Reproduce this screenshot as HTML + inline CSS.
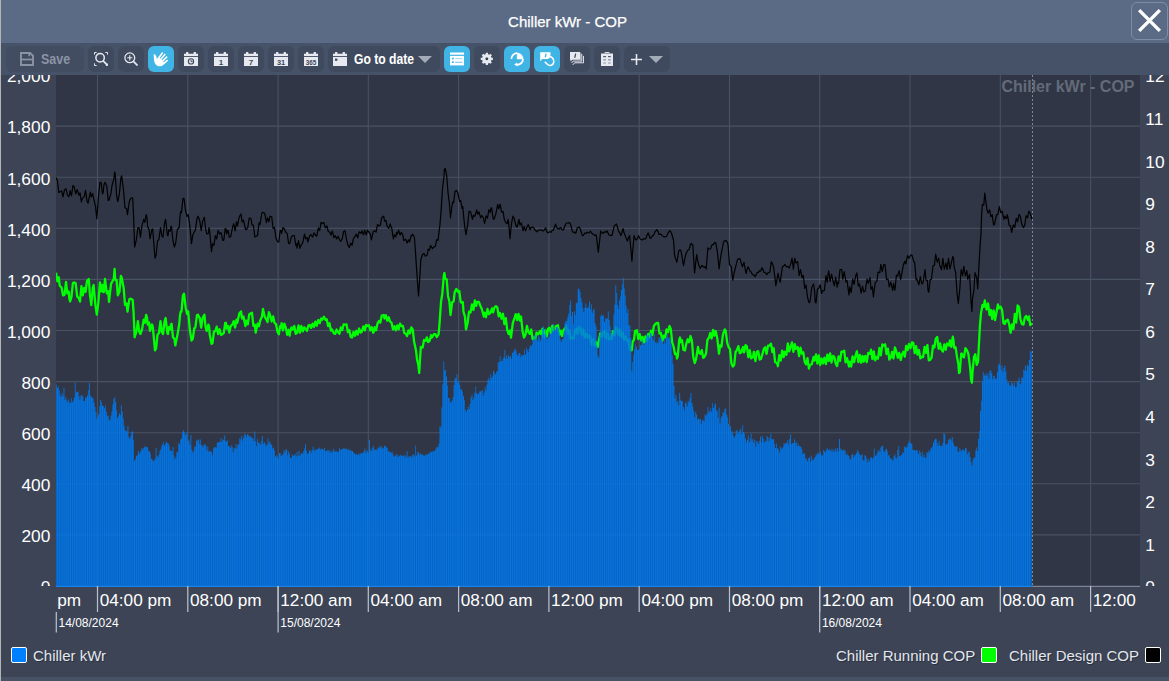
<!DOCTYPE html>
<html lang="en"><head><meta charset="utf-8"><title>Chiller kWr - COP</title>
<style>
html,body{margin:0;padding:0}
body{width:1169px;height:681px;overflow:hidden;position:relative;background:#3c4456;font-family:"Liberation Sans",Arial,sans-serif;color:#fff}
.edge{position:absolute;left:0;top:0;width:1.3px;height:681px;background:#b4b4b6;z-index:5}
.hdr{position:absolute;left:0;top:0;width:1169px;height:43px;background:#5c6b85}
.ttl{position:absolute;left:0;width:1135px;top:12.7px;text-align:center;font-size:15px;line-height:18px;color:#fff;-webkit-text-stroke:.25px #fff}
.cls{position:absolute;left:1131px;top:2px;width:35px;height:36px;border:1px solid #7f8ca6;border-radius:6px;box-sizing:content-box;background:#5c6b85}
.cls svg{position:absolute;left:6.2px;top:6.2px;overflow:visible}
.tbar{position:absolute;left:0;top:43px;width:1169px;height:32px;background:#465267}
.b{position:absolute;top:3px;height:26px;border-radius:6px;background:#404a5e;display:flex;align-items:center;justify-content:center}
.b.on{background:#41b4e6}
.ic{display:block;flex:none}
.save{justify-content:flex-start;background:#434d62}
.save .ic{margin-left:14px}
.sv{position:relative;top:0px;margin-left:7px;font-size:14px;font-weight:bold;color:#8b94a5;display:inline-block;transform:scaleX(.89);transform-origin:left center;margin-right:-4px}
.goto{justify-content:flex-start}
.goto .ic{margin-left:5px}
.gt{position:relative;top:0px;margin-left:7px;font-size:14px;font-weight:bold;color:#fff;white-space:nowrap;display:inline-block;transform:scaleX(.868);transform-origin:left center;margin-right:-8.4px}
.goto .tri{margin-left:3.6px;margin-top:1px}
.plus .tri{margin-left:7.9px;margin-top:1px}
.chart{position:absolute;left:0;top:75px}
.chart text{font-family:"Liberation Sans",Arial,sans-serif;fill:#fff}
.al text{font-size:17.33px}
.chart .xl text{font-size:17.2px}
.dl text{font-size:12px}
.chart text.wm{font-size:16px;font-weight:bold;fill:#636b7a}
.lg{position:absolute;top:647.7px;height:16px;font-size:15px;line-height:16px;color:#e4e7ee;text-shadow:1px 1px 0 #2a303d;white-space:nowrap}
.sq{position:absolute;top:647px;width:14px;height:14px;border:1px solid #fff;border-radius:2px}
.bot{position:absolute;left:0;top:677px;width:1169px;height:4px;background:#475266}
</style></head><body>
<div class="hdr"><div class="ttl">Chiller kWr - COP</div>
<div class="cls"><svg width="23" height="23" viewBox="0 0 23 23"><path d="M1.15 1.15L21.85 21.85M21.85 1.15L1.15 21.85" stroke="#fff" stroke-width="3.4" fill="none"/></svg></div></div>
<div class="tbar"><div class="b save" style="left:6px;width:78px"><svg class="ic" viewBox="0 0 14 14" width="14" height="14" fill="none" stroke="#8b94a5" stroke-width="1.9"><path d="M1 1h9.2l2.8 2.8v9.2H1z"/><path d="M1 7.5h12" stroke-width="1.7"/><path d="M9.2 1v3.2" stroke-width="1.7"/></svg><span class="sv">Save</span></div><div class="b " style="left:88px;width:26px"><svg class="ic" viewBox="0 0 14 14" width="14" height="14" fill="none" stroke="#e6e9f0"><circle cx="6.1" cy="5.7" r="4.2" stroke-width="1.5"/><path d="M9.2 8.9l3.9 3.9" stroke-width="1.7"/><path d="M0.5 2.6V0.5h2.1M11.4 0.5h2.1v2.1M0.5 11.4v2.1h2.1M13.5 11.6v1.9h-1.6" stroke-width="1"/></svg></div><div class="b " style="left:118px;width:26px"><svg class="ic" viewBox="0 0 14 14" width="14" height="14" fill="none" stroke="#e6e9f0"><circle cx="5.8" cy="5.8" r="4.9" stroke-width="1.3"/><path d="M9.4 9.4l4.1 4.1" stroke-width="1.7"/><path d="M3.2 5.8h5.2M5.8 3.2v5.2" stroke-width="1.1"/></svg></div><div class="b on" style="left:148px;width:26px"><svg class="ic" viewBox="0 0 14 14" width="15.5" height="15.5" fill="#fff" stroke="none"><path d="M0.6 2.9 C1.6 2.6 2.6 3.4 2.9 4.6 L3.5 7.2 L8.2 1.0 L9.3 1.7 L5.9 6.6 L6.5 7.0 L10.6 2.2 L11.6 3.1 L7.7 7.9 L8.3 8.4 L12.4 4.6 L13.2 5.6 L9.2 9.6 L9.7 10.1 L13.0 7.7 L13.7 8.8 L9.3 12.6 C7.6 14.2 4.6 14.3 2.9 12.6 C1.2 10.9 0.9 8.5 0.8 6.5 Z"/></svg></div><div class="b " style="left:178px;width:26px"><svg class="ic" viewBox="0 0 14 14" width="14" height="14"><path d="M0 1.7h1.9L2.2 0h2l.3 1.7h5L9.8 0h2l.3 1.7H14V4.1H0z" fill="#e6e9f0"/><rect x="0" y="4.9" width="14" height="9.1" fill="#e6e9f0"/><circle cx="7" cy="9.4" r="2.6" fill="none" stroke="#3d4659" stroke-width="1.1"/><path d="M7 7.8v1.7h1.6" fill="none" stroke="#3d4659" stroke-width=".9"/></svg></div><div class="b " style="left:208px;width:26px"><svg class="ic" viewBox="0 0 14 14" width="14" height="14"><path d="M0 1.7h1.9L2.2 0h2l.3 1.7h5L9.8 0h2l.3 1.7H14V4.1H0z" fill="#e6e9f0"/><rect x="0" y="4.9" width="14" height="9.1" fill="#e6e9f0"/><text x="7" y="12.5" text-anchor="middle" font-size="8" font-weight="bold" fill="#3d4659" font-family="Liberation Sans, sans-serif">1</text></svg></div><div class="b " style="left:238px;width:26px"><svg class="ic" viewBox="0 0 14 14" width="14" height="14"><path d="M0 1.7h1.9L2.2 0h2l.3 1.7h5L9.8 0h2l.3 1.7H14V4.1H0z" fill="#e6e9f0"/><rect x="0" y="4.9" width="14" height="9.1" fill="#e6e9f0"/><text x="7" y="12.5" text-anchor="middle" font-size="8" font-weight="bold" fill="#3d4659" font-family="Liberation Sans, sans-serif">7</text></svg></div><div class="b " style="left:268px;width:26px"><svg class="ic" viewBox="0 0 14 14" width="14" height="14"><path d="M0 1.7h1.9L2.2 0h2l.3 1.7h5L9.8 0h2l.3 1.7H14V4.1H0z" fill="#e6e9f0"/><rect x="0" y="4.9" width="14" height="9.1" fill="#e6e9f0"/><text x="7" y="12.5" text-anchor="middle" font-size="7.4" font-weight="bold" fill="#3d4659" font-family="Liberation Sans, sans-serif">31</text></svg></div><div class="b " style="left:298px;width:26px"><svg class="ic" viewBox="0 0 14 14" width="14" height="14"><path d="M0 1.7h1.9L2.2 0h2l.3 1.7h5L9.8 0h2l.3 1.7H14V4.1H0z" fill="#e6e9f0"/><rect x="0" y="4.9" width="14" height="9.1" fill="#e6e9f0"/><text x="7" y="12.5" text-anchor="middle" font-size="6.3" font-weight="bold" fill="#3d4659" font-family="Liberation Sans, sans-serif">365</text></svg></div><div class="b goto" style="left:328px;width:112px"><svg class="ic" viewBox="0 0 14 14" width="14" height="14"><path d="M0 1.7h1.9L2.2 0h2l.3 1.7h5L9.8 0h2l.3 1.7H14V4.1H0z" fill="#e6e9f0"/><rect x="0" y="4.9" width="14" height="9.1" fill="#e6e9f0"/><rect x="2" y="6.6" width="2.4" height="2.2" fill="#3d4659"/></svg><span class="gt">Go to date</span><svg class="tri" viewBox="0 0 14 7" width="14" height="7"><path d="M0 0h14L7 7z" fill="#a3abb9"/></svg></div><div class="b on" style="left:444px;width:26px"><svg class="ic" viewBox="0 0 14 14" width="14" height="14"><rect x="0" y="0.5" width="14" height="2.2" fill="#fff"/><rect x="0" y="3.9" width="14" height="9.5" fill="#fff"/><rect x="1.9" y="5.7" width="1.9" height="1.7" fill="#41b4e6"/><rect x="5.2" y="6.1" width="7.1" height="1" fill="#9ad8f2"/><rect x="1.9" y="9.3" width="1.9" height="1.7" fill="#41b4e6"/><rect x="5.2" y="9.8" width="7.1" height=".9" fill="#55bde9"/></svg></div><div class="b " style="left:474px;width:26px"><svg class="ic" viewBox="0 0 14 14" width="13.7" height="13.7"><path d="M5.93,0.79L8.07,0.79L8.21,2.25L9.50,2.79L10.64,1.86L12.14,3.36L11.21,4.50L11.75,5.79L13.21,5.93L13.21,8.07L11.75,8.21L11.21,9.50L12.14,10.64L10.64,12.14L9.50,11.21L8.21,11.75L8.07,13.21L5.93,13.21L5.79,11.75L4.50,11.21L3.36,12.14L1.86,10.64L2.79,9.50L2.25,8.21L0.79,8.07L0.79,5.93L2.25,5.79L2.79,4.50L1.86,3.36L3.36,1.86L4.50,2.79L5.79,2.25Z" fill="#e6e9f0"/><circle cx="7" cy="7" r="1.45" fill="#2f3747"/></svg></div><div class="b on" style="left:504px;width:26px"><svg class="ic" viewBox="0 0 16 16" width="16" height="16" fill="none" stroke="#fff"><path d="M8.2 7.9V2A5.9 5.9 0 0 1 14.1 7.9z" fill="#fff" stroke="#fff" stroke-width=".6"/><path d="M8.2 2.1A5.8 5.8 0 0 0 2.4 7.9" stroke-width="1.75"/><path d="M14 7.9A5.8 5.8 0 0 1 7.6 13.7" stroke-width="1.75"/><path d="M8.1 11.4L5.2 13.6L8.5 15.6z" fill="#fff" stroke="none"/></svg></div><div class="b on" style="left:534px;width:26px"><svg class="ic" viewBox="0 0 26 26" width="26" height="26" fill="none"><path d="M6.2 6.3H16.5V9.6L14.2 12.9H8.2L6.2 15.2z" fill="#fff"/><path d="M12.1 7.6L11.2 11.4" stroke="#41b4e6" stroke-width="1.3"/><path d="M14.6 11.2C17.2 9.9 20.2 12.6 19.8 15.8C19.4 19.4 15.6 20.3 13.6 18.5L11.2 16.2" stroke="#fff" stroke-width="1.55" stroke-linecap="round"/></svg></div><div class="b " style="left:564px;width:26px"><svg class="ic" viewBox="0 0 14.2 13.4" width="14.2" height="13.4" fill="none"><path d="M13.6 3.9V10.8H4.6L2.8 12.9" stroke="#e6e9f0" stroke-width="1"/><path d="M10.6 2.2h1.2V9.1H3.2L1.6 11" stroke="#e6e9f0" stroke-width="1"/><rect x="10.3" y="2.7" width="1" height="5.9" fill="#a9b0bf"/><path d="M0 0H10.3V7.7H2.4L0.5 9.6V7.7H0z" fill="#e6e9f0"/><path d="M5.7 1.7L4.7 5.9" stroke="#3d4659" stroke-width="1.2"/></svg></div><div class="b " style="left:594px;width:26px"><svg class="ic" viewBox="0 0 12 14" width="12" height="14"><path d="M0 1.4h3.6V0.6C3.6 0.2 4 0 4.4 0h3.2c.4 0 .8.2.8.6v.8H12V14H0z" fill="#e6e9f0"/><rect x="4" y="0.9" width="4" height="1" fill="#404a5e" opacity=".55"/><g fill="#404a5e" opacity=".9"><rect x="2.2" y="4" width="2.8" height="1.2"/><rect x="7" y="4" width="2.8" height="1.2"/><rect x="2.2" y="7.2" width="2.8" height="1.2" opacity=".6"/><rect x="7" y="7.2" width="2.8" height="1.2" opacity=".6"/><rect x="2.2" y="10.4" width="2.8" height="1.2" opacity=".45"/><rect x="7" y="10.4" width="2.8" height="1.2" opacity=".45"/></g></svg></div><div class="b plus" style="left:624px;width:46px"><svg class="ic" viewBox="0 0 12 12" width="11" height="11"><path d="M6 0v12M0 6h12" stroke="#e6e9f0" stroke-width="1.7" fill="none"/></svg><svg class="tri" viewBox="0 0 14 7" width="14" height="7"><path d="M0 0h14L7 7z" fill="#a3abb9"/></svg></div></div>
<svg class="chart" width="1169" height="602" viewBox="0 75 1169 602">
<defs>
<clipPath id="cp"><rect x="56" y="75" width="1084" height="511"/></clipPath>
<clipPath id="cpb"><rect x="56" y="75" width="1084" height="512"/></clipPath>
<clipPath id="cl"><rect x="0" y="75" width="1169" height="511"/></clipPath>
<clipPath id="cx"><rect x="56" y="586" width="1084" height="60"/></clipPath>
<clipPath id="cb"><path d="M56.00,587V384.7H56.94V387.9H57.88V386.5H58.82V390.2H59.76V395.3H60.70V397.3H61.64V393.1H62.58V395.7H63.52V387.8H64.46V399.8H65.40V396.8H66.34V400.4H67.28V402.2H68.22V399.4H69.16V402.8H70.10V402.4H71.04V398.1H71.98V402.6H72.92V400.4H73.86V397.4H74.80V382.6H75.74V392.6H76.68V392.1H77.62V391.4H78.56V396.1H79.50V399.6H80.44V395.8H81.38V395.1H82.32V396.5H83.26V400.9H84.20V401.2H85.14V397.6H86.08V397.7H87.02V395.5H87.96V390.1H88.90V383.1H89.84V395.2H90.78V396.7H91.72V397.4H92.66V398.6H93.60V402.3H94.54V407.0H95.48V412.1H96.42V418.9H97.36V416.3H98.30V414.1H99.24V406.6H100.18V400.0H101.12V402.2H102.06V405.8H103.00V406.0H103.94V408.2H104.88V405.4H105.82V411.4H106.76V415.6H107.70V415.7H108.64V419.5H109.58V420.6H110.52V415.8H111.46V411.4H112.40V404.4H113.34V398.8H114.28V397.1H115.22V401.9H116.16V410.3H117.10V417.9H118.04V415.7H118.98V413.3H119.92V415.2H120.86V405.3H121.80V411.7H122.74V418.3H123.68V425.9H124.62V430.4H125.56V430.4H126.50V431.6H127.44V425.9H128.38V437.2H129.32V439.1H130.26V435.9H131.20V432.0H132.14V431.2H133.08V440.6H134.02V460.8H134.96V458.9H135.90V455.9H136.84V455.3H137.78V450.8H138.72V453.7H139.66V452.2H140.60V450.5H141.54V448.0H142.48V449.4H143.42V447.8H144.36V446.3H145.30V447.0H146.24V446.8H147.18V447.5H148.12V451.2H149.06V451.3H150.00V453.7H150.94V458.7H151.88V459.4H152.82V460.9H153.76V460.4H154.70V458.7H155.64V448.1H156.58V456.1H157.52V457.3H158.46V454.7H159.40V451.1H160.34V449.1H161.28V446.0H162.22V444.1H163.16V441.8H164.10V445.4H165.04V443.7H165.98V441.7H166.92V443.1H167.86V443.5H168.80V445.7H169.74V450.3H170.68V451.0H171.62V451.1H172.56V447.1H173.50V455.5H174.44V459.1H175.38V457.3H176.32V451.7H177.26V452.6H178.20V443.0H179.14V444.2H180.08V439.7H181.02V438.4H181.96V432.2H182.90V430.2H183.84V432.0H184.78V435.3H185.72V433.7H186.66V432.1H187.60V441.1H188.54V439.5H189.48V444.8H190.42V435.1H191.36V449.4H192.30V452.7H193.24V451.0H194.18V446.5H195.12V446.7H196.06V440.8H197.00V439.8H197.94V439.6H198.88V443.4H199.82V439.5H200.76V445.1H201.70V445.3H202.64V447.3H203.58V444.4H204.52V444.4H205.46V445.6H206.40V450.5H207.34V446.4H208.28V451.7H209.22V451.3H210.16V451.0H211.10V452.2H212.04V455.3H212.98V448.4H213.92V447.4H214.86V446.9H215.80V447.8H216.74V442.9H217.68V441.9H218.62V442.0H219.56V441.8H220.50V438.1H221.44V442.1H222.38V439.3H223.32V440.0H224.26V435.6H225.20V441.3H226.14V441.6H227.08V440.5H228.02V446.1H228.96V446.2H229.90V448.1H230.84V445.2H231.78V446.9H232.72V452.4H233.66V448.2H234.60V448.2H235.54V444.4H236.48V448.4H237.42V443.9H238.36V444.7H239.30V438.4H240.24V439.6H241.18V435.7H242.12V440.8H243.06V437.7H244.00V433.6H244.94V434.8H245.88V437.6H246.82V434.3H247.76V434.8H248.70V436.2H249.64V436.3H250.58V436.7H251.52V438.3H252.46V438.1H253.40V441.0H254.34V431.6H255.28V441.5H256.22V446.3H257.16V438.7H258.10V442.7H259.04V442.8H259.98V444.3H260.92V441.1H261.86V436.1H262.80V444.1H263.74V442.1H264.68V443.6H265.62V446.2H266.56V444.7H267.50V438.4H268.44V443.5H269.38V441.2H270.32V443.7H271.26V444.9H272.20V448.5H273.14V447.7H274.08V450.4H275.02V456.4H275.96V455.0H276.90V456.2H277.84V459.1H278.78V453.0H279.72V452.9H280.66V456.1H281.60V454.7H282.54V454.5H283.48V450.3H284.42V452.2H285.36V449.8H286.30V449.5H287.24V455.2H288.18V451.5H289.12V453.4H290.06V458.0H291.00V457.8H291.94V454.5H292.88V455.9H293.82V455.3H294.76V454.1H295.70V456.5H296.64V452.0H297.58V456.1H298.52V450.9H299.46V455.8H300.40V454.0H301.34V452.9H302.28V453.7H303.22V451.0H304.16V448.6H305.10V444.0H306.04V450.9H306.98V453.7H307.92V453.6H308.86V450.5H309.80V450.4H310.74V452.7H311.68V450.1H312.62V446.7H313.56V451.0H314.50V449.5H315.44V450.5H316.38V449.2H317.32V449.0H318.26V448.4H319.20V447.6H320.14V449.7H321.08V448.5H322.02V449.1H322.96V450.0H323.90V447.9H324.84V451.0H325.78V451.3H326.72V450.3H327.66V451.0H328.60V449.7H329.54V452.7H330.48V450.8H331.42V452.8H332.36V450.9H333.30V448.7H334.24V452.1H335.18V451.2H336.12V451.6H337.06V451.7H338.00V452.1H338.94V448.2H339.88V450.0H340.82V449.4H341.76V449.3H342.70V448.6H343.64V448.3H344.58V449.2H345.52V448.2H346.46V449.2H347.40V450.5H348.34V448.7H349.28V450.8H350.22V450.1H351.16V450.9H352.10V451.1H353.04V452.5H353.98V453.2H354.92V454.3H355.86V454.3H356.80V455.1H357.74V453.5H358.68V454.9H359.62V452.7H360.56V453.9H361.50V452.9H362.44V452.9H363.38V451.3H364.32V448.5H365.26V452.8H366.20V450.1H367.14V451.4H368.08V452.9H369.02V440.1H369.96V449.6H370.90V451.1H371.84V448.0H372.78V445.8H373.72V449.6H374.66V449.9H375.60V448.9H376.54V450.2H377.48V447.5H378.42V448.1H379.36V445.8H380.30V447.5H381.24V446.5H382.18V448.6H383.12V448.2H384.06V445.7H385.00V446.1H385.94V447.2H386.88V448.3H387.82V451.3H388.76V451.4H389.70V452.2H390.64V452.7H391.58V451.7H392.52V454.0H393.46V456.7H394.40V456.1H395.34V455.3H396.28V454.0H397.22V457.1H398.16V455.3H399.10V456.2H400.04V454.7H400.98V455.4H401.92V455.7H402.86V456.1H403.80V454.8H404.74V457.5H405.68V455.7H406.62V451.1H407.56V457.9H408.50V456.2H409.44V456.6H410.38V456.1H411.32V457.5H412.26V455.1H413.20V454.1H414.14V456.6H415.08V445.7H416.02V455.5H416.96V451.9H417.90V452.5H418.84V454.8H419.78V453.1H420.72V454.7H421.66V453.9H422.60V455.1H423.54V456.1H424.48V455.6H425.42V454.3H426.36V454.8H427.30V454.6H428.24V453.1H429.18V453.5H430.12V451.6H431.06V452.0H432.00V451.5H432.94V451.5H433.88V451.1H434.82V450.2H435.76V447.8H436.70V446.8H437.64V447.3H438.58V443.6H439.52V425.9H440.46V427.6H441.40V407.5H442.34V384.3H443.28V361.6H444.22V370.6H445.16V369.9H446.10V376.5H447.04V385.5H447.98V398.1H448.92V398.0H449.86V402.6H450.80V401.9H451.74V400.4H452.68V397.0H453.62V384.9H454.56V378.2H455.50V378.2H456.44V374.2H457.38V381.9H458.32V381.3H459.26V384.8H460.20V389.5H461.14V389.2H462.08V391.7H463.02V396.0H463.96V400.2H464.90V409.4H465.84V411.9H466.78V410.0H467.72V406.7H468.66V409.0H469.60V403.7H470.54V397.5H471.48V394.7H472.42V400.1H473.36V397.5H474.30V392.8H475.24V386.5H476.18V393.2H477.12V394.6H478.06V393.4H479.00V391.4H479.94V391.4H480.88V391.1H481.82V390.0H482.76V395.8H483.70V392.8H484.64V386.9H485.58V390.4H486.52V384.5H487.46V379.7H488.40V377.7H489.34V380.7H490.28V374.0H491.22V378.1H492.16V376.2H493.10V370.7H494.04V372.7H494.98V374.6H495.92V371.4H496.86V371.6H497.80V362.0H498.74V362.5H499.68V356.1H500.62V361.1H501.56V361.1H502.50V358.9H503.44V356.9H504.38V349.7H505.32V359.1H506.26V355.4H507.20V358.4H508.14V355.0H509.08V357.1H510.02V356.0H510.96V359.0H511.90V352.7H512.84V352.2H513.78V350.6H514.72V348.4H515.66V350.8H516.60V354.7H517.54V355.7H518.48V352.9H519.42V352.9H520.36V357.1H521.30V354.9H522.24V355.2H523.18V355.1H524.12V349.6H525.06V354.7H526.00V347.8H526.94V350.3H527.88V352.5H528.82V348.5H529.76V345.4H530.70V345.9H531.64V344.6H532.58V339.8H533.52V335.2H534.46V340.0H535.40V334.7H536.34V338.9H537.28V341.5H538.22V335.5H539.16V338.3H540.10V340.8H541.04V334.8H541.98V329.0H542.92V326.0H543.86V334.3H544.80V328.8H545.74V335.3H546.68V339.3H547.62V337.6H548.56V337.3H549.50V334.1H550.44V333.3H551.38V327.3H552.32V330.7H553.26V323.8H554.20V327.9H555.14V330.7H556.08V327.2H557.02V327.1H557.96V328.6H558.90V331.7H559.84V339.2H560.78V341.7H561.72V339.8H562.66V338.5H563.60V332.1H564.54V322.9H565.48V320.9H566.42V320.7H567.36V317.1H568.30V313.4H569.24V305.2H570.18V300.5H571.12V315.9H572.06V312.0H573.00V324.6H573.94V311.2H574.88V315.3H575.82V303.3H576.76V302.8H577.70V288.6H578.64V289.3H579.58V291.7H580.52V298.1H581.46V302.5H582.40V307.8H583.34V312.0H584.28V308.1H585.22V303.4H586.16V307.7H587.10V308.0H588.04V306.6H588.98V301.6H589.92V309.2H590.86V304.2H591.80V312.7H592.74V310.4H593.68V308.7H594.62V323.1H595.56V326.2H596.50V345.5H597.44V355.4H598.38V357.7H599.32V334.7H600.26V316.2H601.20V314.3H602.14V316.0H603.08V315.0H604.02V321.8H604.96V318.1H605.90V319.1H606.84V318.3H607.78V311.5H608.72V320.0H609.66V325.8H610.60V333.1H611.54V335.3H612.48V331.6H613.42V314.6H614.36V304.8H615.30V285.2H616.24V292.9H617.18V304.9H618.12V308.9H619.06V300.4H620.00V296.5H620.94V290.1H621.88V284.2H622.82V278.0H623.76V288.3H624.70V295.5H625.64V305.8H626.58V312.9H627.52V309.1H628.46V325.6H629.40V325.6H630.34V337.9H631.28V371.3H632.22V362.2H633.16V354.8H634.10V348.8H635.04V344.4H635.98V346.8H636.92V350.1H637.86V350.1H638.80V349.1H639.74V345.3H640.68V345.0H641.62V339.2H642.56V343.5H643.50V344.9H644.44V343.1H645.38V338.0H646.32V333.7H647.26V335.8H648.20V334.8H649.14V337.5H650.08V333.1H651.02V333.7H651.96V337.1H652.90V340.2H653.84V334.5H654.78V342.1H655.72V343.3H656.66V341.4H657.60V343.2H658.54V338.0H659.48V336.9H660.42V339.9H661.36V338.2H662.30V341.3H663.24V344.2H664.18V338.0H665.12V343.4H666.06V338.0H667.00V333.9H667.94V338.3H668.88V337.0H669.82V339.8H670.76V344.9H671.70V355.0H672.64V364.2H673.58V385.9H674.52V397.9H675.46V394.7H676.40V402.2H677.34V400.8H678.28V405.5H679.22V392.8H680.16V399.7H681.10V401.1H682.04V400.9H682.98V406.9H683.92V410.6H684.86V402.6H685.80V403.5H686.74V406.5H687.68V400.8H688.62V402.2H689.56V397.7H690.50V393.0H691.44V403.1H692.38V406.8H693.32V411.0H694.26V417.3H695.20V412.2H696.14V414.8H697.08V419.7H698.02V418.6H698.96V419.5H699.90V418.7H700.84V424.0H701.78V420.7H702.72V419.8H703.66V421.3H704.60V414.4H705.54V415.8H706.48V414.0H707.42V406.9H708.36V412.6H709.30V411.0H710.24V408.2H711.18V411.9H712.12V402.7H713.06V407.9H714.00V405.4H714.94V403.5H715.88V409.9H716.82V411.3H717.76V418.2H718.70V407.7H719.64V423.6H720.58V417.8H721.52V416.1H722.46V412.1H723.40V413.0H724.34V409.0H725.28V408.3H726.22V414.4H727.16V417.4H728.10V423.7H729.04V427.0H729.98V426.2H730.92V431.6H731.86V431.2H732.80V435.5H733.74V437.8H734.68V435.8H735.62V431.0H736.56V429.8H737.50V433.8H738.44V432.1H739.38V430.6H740.32V428.4H741.26V434.0H742.20V425.1H743.14V432.0H744.08V433.6H745.02V438.4H745.96V442.5H746.90V440.0H747.84V435.3H748.78V442.0H749.72V438.6H750.66V433.5H751.60V441.1H752.54V438.7H753.48V442.9H754.42V440.1H755.36V446.8H756.30V441.0H757.24V441.7H758.18V444.0H759.12V440.7H760.06V436.5H761.00V442.7H761.94V436.3H762.88V438.8H763.82V442.6H764.76V441.0H765.70V441.4H766.64V436.1H767.58V437.6H768.52V441.3H769.46V437.7H770.40V433.6H771.34V439.4H772.28V438.9H773.22V439.2H774.16V444.0H775.10V448.0H776.04V443.5H776.98V447.9H777.92V449.5H778.86V452.7H779.80V446.5H780.74V448.5H781.68V448.8H782.62V447.0H783.56V443.2H784.50V444.5H785.44V443.1H786.38V442.8H787.32V439.9H788.26V444.4H789.20V438.9H790.14V434.5H791.08V444.2H792.02V443.3H792.96V443.1H793.90V439.2H794.84V443.4H795.78V441.7H796.72V446.3H797.66V443.5H798.60V446.1H799.54V446.0H800.48V446.9H801.42V449.3H802.36V454.0H803.30V453.3H804.24V453.6H805.18V458.8H806.12V458.6H807.06V461.3H808.00V458.0H808.94V457.4H809.88V462.0H810.82V455.7H811.76V459.8H812.70V460.4H813.64V458.5H814.58V457.1H815.52V455.3H816.46V454.3H817.40V452.4H818.34V453.8H819.28V454.0H820.22V451.7H821.16V455.7H822.10V455.2H823.04V449.9H823.98V451.3H824.92V452.4H825.86V449.8H826.80V447.7H827.74V450.5H828.68V448.9H829.62V449.9H830.56V451.3H831.50V448.7H832.44V451.8H833.38V449.5H834.32V451.6H835.26V448.5H836.20V451.4H837.14V447.9H838.08V451.3H839.02V439.0H839.96V448.5H840.90V449.5H841.84V450.7H842.78V449.6H843.72V450.8H844.66V450.3H845.60V455.0H846.54V453.5H847.48V455.0H848.42V456.0H849.36V459.8H850.30V458.4H851.24V454.7H852.18V454.0H853.12V457.5H854.06V455.2H855.00V454.7H855.94V453.1H856.88V450.2H857.82V451.2H858.76V453.8H859.70V455.0H860.64V455.4H861.58V454.1H862.52V460.1H863.46V460.7H864.40V455.1H865.34V456.0H866.28V458.8H867.22V462.5H868.16V458.8H869.10V461.2H870.04V456.9H870.98V457.4H871.92V459.1H872.86V457.6H873.80V448.5H874.74V455.3H875.68V455.9H876.62V453.6H877.56V451.1H878.50V450.1H879.44V452.3H880.38V447.6H881.32V446.3H882.26V445.8H883.20V450.8H884.14V451.9H885.08V449.6H886.02V449.0H886.96V451.6H887.90V455.5H888.84V454.7H889.78V457.9H890.72V458.8H891.66V459.5H892.60V460.4H893.54V455.9H894.48V454.5H895.42V457.8H896.36V458.6H897.30V450.0H898.24V445.8H899.18V456.3H900.12V455.7H901.06V455.0H902.00V452.6H902.94V452.8H903.88V446.5H904.82V447.1H905.76V448.2H906.70V446.5H907.64V443.6H908.58V440.8H909.52V442.8H910.46V443.1H911.40V443.9H912.34V450.0H913.28V449.8H914.22V450.2H915.16V450.8H916.10V450.2H917.04V450.6H917.98V454.1H918.92V450.4H919.86V452.5H920.80V456.3H921.74V451.7H922.68V457.6H923.62V454.5H924.56V457.5H925.50V457.9H926.44V452.0H927.38V453.5H928.32V450.6H929.26V451.9H930.20V448.7H931.14V447.8H932.08V446.4H933.02V442.4H933.96V440.2H934.90V438.8H935.84V439.2H936.78V442.9H937.72V446.0H938.66V441.0H939.60V445.4H940.54V445.7H941.48V446.2H942.42V442.9H943.36V433.3H944.30V434.3H945.24V444.7H946.18V444.2H947.12V443.5H948.06V439.5H949.00V439.6H949.94V438.5H950.88V440.6H951.82V437.1H952.76V442.4H953.70V445.4H954.64V446.5H955.58V446.8H956.52V446.5H957.46V451.5H958.40V452.0H959.34V447.9H960.28V450.1H961.22V451.2H962.16V449.4H963.10V449.8H964.04V451.0H964.98V447.8H965.92V448.5H966.86V454.3H967.80V452.2H968.74V451.5H969.68V456.9H970.62V461.9H971.56V465.7H972.50V459.6H973.44V458.3H974.38V457.0H975.32V450.4H976.26V447.4H977.20V451.3H978.14V439.0H979.08V431.1H980.02V410.9H980.96V400.7H981.90V381.8H982.84V371.9H983.78V374.7H984.72V376.1H985.66V373.4H986.60V375.7H987.54V373.2H988.48V379.1H989.42V370.7H990.36V370.5H991.30V373.2H992.24V378.9H993.18V375.9H994.12V375.7H995.06V379.0H996.00V378.5H996.94V372.1H997.88V364.8H998.82V363.5H999.76V366.0H1000.70V369.9H1001.64V365.2H1002.58V372.1H1003.52V368.0H1004.46V365.8H1005.40V371.4H1006.34V379.6H1007.28V383.0H1008.22V382.6H1009.16V385.3H1010.10V385.7H1011.04V382.3H1011.98V383.3H1012.92V385.4H1013.86V382.4H1014.80V387.1H1015.74V387.1H1016.68V382.3H1017.62V380.8H1018.56V377.6H1019.50V384.2H1020.44V383.3H1021.38V377.0H1022.32V378.0H1023.26V369.8H1024.20V370.6H1025.14V365.7H1026.08V371.2H1027.02V364.7H1027.96V366.2H1028.90V360.1H1029.84V350.7H1030.78V351.7H1031.72V587Z"/></clipPath>
<pattern id="st" width="1.88" height="8" patternUnits="userSpaceOnUse" x="56"><rect x="0" y="0" width="0.7" height="8" fill="#002a66" fill-opacity=".3"/></pattern>
</defs>
<rect x="56" y="75" width="1084" height="511" fill="#303645"/>
<g stroke="#485265" stroke-width="1.1" shape-rendering="auto"><line x1="97.5" y1="75" x2="97.5" y2="586"/><line x1="187.8" y1="75" x2="187.8" y2="586"/><line x1="278.1" y1="75" x2="278.1" y2="586"/><line x1="368.3" y1="75" x2="368.3" y2="586"/><line x1="458.6" y1="75" x2="458.6" y2="586"/><line x1="548.9" y1="75" x2="548.9" y2="586"/><line x1="639.2" y1="75" x2="639.2" y2="586"/><line x1="729.5" y1="75" x2="729.5" y2="586"/><line x1="819.7" y1="75" x2="819.7" y2="586"/><line x1="910.0" y1="75" x2="910.0" y2="586"/><line x1="1000.3" y1="75" x2="1000.3" y2="586"/><line x1="1090.6" y1="75" x2="1090.6" y2="586"/><line x1="56" y1="534.9" x2="1140" y2="534.9"/><line x1="56" y1="483.8" x2="1140" y2="483.8"/><line x1="56" y1="432.7" x2="1140" y2="432.7"/><line x1="56" y1="381.6" x2="1140" y2="381.6"/><line x1="56" y1="330.5" x2="1140" y2="330.5"/><line x1="56" y1="279.4" x2="1140" y2="279.4"/><line x1="56" y1="228.3" x2="1140" y2="228.3"/><line x1="56" y1="177.2" x2="1140" y2="177.2"/><line x1="56" y1="126.1" x2="1140" y2="126.1"/></g>
<line x1="56" y1="586.3" x2="1140" y2="586.3" stroke="#8d95a4" stroke-width="1"/>
<g clip-path="url(#cpb)">
<path d="M56.0,272.7L57.4,281.4L58.8,277.3L59.7,285.7L61.6,287.6L63.0,295.3L64.5,294.8L66.0,282.0L67.3,293.4L68.7,291.4L69.4,298.6L70.1,301.4L71.5,296.7L72.9,283.0L74.2,282.4L75.7,283.2L77.2,296.6L79.0,298.6L80.0,301.6L81.4,286.2L82.0,290.0L82.8,295.3L84.2,287.8L85.5,292.0L87.0,281.0L88.8,279.0L89.8,293.7L91.3,305.0L92.7,288.1L93.6,285.0L95.5,305.9L96.8,314.7L98.3,303.2L100.0,282.4L101.1,291.3L102.5,284.8L103.3,292.0L103.9,291.9L105.0,279.0L106.8,293.4L108.2,291.3L109.0,301.8L111.0,284.1L112.0,282.0L113.8,278.9L114.6,268.9L115.2,279.8L116.6,279.9L117.8,295.3L119.4,292.1L120.9,275.9L121.7,277.6L123.7,288.3L125.0,305.0L126.5,303.4L127.5,311.5L129.3,299.3L130.7,298.6L132.7,300.0L133.6,312.6L134.6,337.3L136.4,331.7L137.9,321.2L139.2,331.5L140.4,334.0L142.0,329.6L143.7,319.6L144.8,322.9L146.2,314.8L147.0,318.0L147.6,324.5L149.1,322.5L150.0,330.9L151.9,324.4L152.7,326.0L155.0,350.3L156.1,348.4L157.5,334.8L158.2,334.0L158.9,333.2L160.5,321.2L161.8,332.0L163.0,334.0L164.6,321.4L165.6,318.0L167.4,333.4L168.0,334.0L168.8,327.1L170.2,329.5L171.0,324.5L171.6,323.8L173.0,337.4L174.4,338.7L175.3,345.4L177.6,334.0L179.2,324.5L180.1,314.4L180.8,311.5L181.5,311.6L182.9,295.6L184.0,293.7L185.7,308.0L187.1,314.1L188.2,311.5L189.9,330.3L191.5,340.6L192.8,338.8L194.2,328.5L195.3,327.6L197.0,315.1L198.0,314.7L199.8,318.2L201.2,327.6L202.6,317.9L204.4,314.7L205.5,326.5L206.7,331.0L208.3,324.7L209.0,326.0L209.7,334.6L211.5,343.8L212.5,343.0L213.9,331.8L215.4,331.0L216.7,326.7L218.1,334.0L219.6,329.3L221.0,334.9L222.8,334.0L223.8,333.0L225.2,322.9L226.0,322.8L226.6,328.5L228.0,325.9L229.3,332.5L230.8,325.8L232.5,324.4L233.7,321.1L235.1,327.6L236.5,319.7L237.3,322.8L239.3,313.5L241.0,311.5L242.1,318.7L243.5,316.5L245.4,326.0L246.3,320.7L247.8,324.4L249.2,314.5L251.0,313.1L252.0,312.8L253.4,325.9L254.8,324.7L255.7,332.5L257.6,323.7L259.0,326.3L260.0,321.0L261.9,316.7L263.0,309.0L264.7,316.7L266.4,319.6L267.5,322.1L268.9,312.2L270.0,314.7L271.7,321.5L273.1,316.3L274.5,322.8L276.0,324.1L277.7,332.5L278.8,334.2L280.2,326.1L281.0,327.6L281.6,323.2L283.0,330.3L284.4,323.6L285.8,327.6L287.2,334.8L288.6,329.8L289.7,335.7L290.0,332.7L291.5,327.4L293.0,329.5L294.3,326.0L295.7,333.8L297.1,332.8L298.5,325.4L299.9,332.7L301.3,326.0L302.8,331.3L304.2,327.3L306.0,329.4L307.0,330.8L308.4,325.6L309.8,324.9L311.2,327.9L312.6,323.7L314.0,326.9L315.4,321.6L316.8,325.7L318.3,320.0L319.7,323.1L321.1,318.5L322.0,319.8L323.9,316.8L325.5,319.8L326.7,319.2L328.1,326.0L329.5,323.3L330.9,330.5L332.0,329.4L333.8,333.2L335.2,333.9L336.6,329.5L338.4,332.7L339.4,333.8L340.8,327.4L342.2,330.1L343.6,324.5L345.0,324.6L346.5,324.3L347.9,332.2L349.3,330.2L350.7,337.0L351.4,336.0L352.1,337.5L353.5,331.8L354.9,335.8L356.3,330.8L357.7,334.6L359.1,328.5L360.6,332.6L362.0,331.3L363.4,326.4L364.8,330.4L366.2,324.8L367.5,326.0L369.0,325.2L370.4,330.4L371.8,327.2L373.2,332.7L374.0,331.0L374.7,327.1L376.1,330.3L377.5,323.4L378.9,321.0L380.3,322.7L381.7,315.7L383.7,315.0L384.5,318.5L385.9,315.3L387.3,320.7L388.8,317.2L390.0,321.4L391.6,322.9L393.0,329.4L394.4,326.3L395.8,330.3L397.2,325.4L398.6,329.4L400.0,323.7L401.4,326.0L402.9,325.9L404.3,333.1L406.0,334.0L407.1,336.1L408.5,330.3L409.9,333.5L411.3,327.4L412.7,329.4L414.1,341.4L416.0,350.4L417.0,359.3L418.4,365.3L419.2,373.0L420.8,347.0L422.6,347.6L424.0,340.0L425.7,340.7L426.8,337.4L428.2,342.0L429.6,340.9L431.1,335.2L432.0,337.5L433.9,334.2L435.3,334.1L436.7,337.0L438.6,334.3L439.5,324.1L441.0,302.0L442.3,293.7L443.8,275.8L444.4,273.0L445.2,278.7L446.7,279.4L448.0,295.9L449.4,301.6L450.5,315.0L452.2,302.2L453.6,301.4L454.7,292.0L456.4,288.9L458.0,292.0L459.3,291.0L460.7,302.1L462.1,303.2L462.8,302.0L463.5,311.8L464.9,316.4L466.0,329.4L467.7,322.4L469.0,311.7L470.5,312.5L471.9,304.5L473.4,310.0L474.8,300.3L476.2,305.9L477.0,302.0L479.0,302.0L480.4,306.1L481.8,309.0L483.8,316.5L484.6,312.7L486.0,317.2L487.5,309.0L488.9,314.2L490.3,313.0L492.0,308.4L493.1,312.3L494.5,307.3L495.9,306.2L497.3,307.3L498.7,316.3L500.0,313.0L501.6,318.7L503.0,313.8L504.4,324.0L505.8,318.1L506.4,323.0L507.2,329.8L508.6,334.0L510.0,330.5L511.0,337.5L512.8,323.2L514.5,318.0L515.7,314.2L517.1,320.1L518.5,313.8L519.9,320.5L521.0,316.5L522.7,332.1L524.0,337.5L525.5,334.6L527.0,326.0L528.3,331.9L529.8,333.9L531.2,329.5L532.6,339.2L534.0,337.5L535.4,338.5L536.5,332.7L538.2,334.3L540.0,331.0L541.0,334.1L542.5,328.8L543.9,336.7L545.3,330.1L546.0,334.0L546.7,336.5L548.1,328.6L549.5,327.7L550.9,333.2L552.3,325.7L553.7,330.3L555.1,328.9L556.0,326.0L558.0,325.3L559.4,334.7L560.8,330.7L562.0,336.0L563.6,329.9L565.5,327.8L566.4,325.5L567.8,333.9L569.2,330.2L570.6,339.1L572.0,337.5L573.5,338.6L574.9,331.4L576.3,328.6L577.7,333.6L578.4,329.4L579.1,326.9L580.5,328.3L581.9,334.6L583.3,329.7L584.8,337.6L586.2,333.7L588.0,337.5L589.0,335.2L590.4,337.6L591.8,344.8L593.2,339.0L594.6,346.1L596.0,341.9L597.8,347.0L598.9,340.0L600.3,333.3L601.0,334.0L601.7,336.6L603.1,331.8L604.5,331.3L605.9,338.1L607.3,333.0L608.7,339.4L610.7,337.5L611.5,339.2L612.9,331.1L614.4,335.7L615.8,327.5L617.0,329.4L618.6,335.0L620.0,329.6L621.4,337.0L622.8,332.6L624.2,339.9L625.6,336.3L627.0,340.7L628.5,339.8L629.9,349.8L631.7,350.4L632.7,341.9L634.1,339.4L635.0,331.0L636.9,330.2L638.3,339.1L639.7,334.2L641.4,340.7L642.6,336.9L644.0,342.6L645.4,336.4L646.8,341.6L648.2,334.0L649.5,337.5L651.0,330.7L652.4,335.0L653.8,326.2L655.2,324.1L657.0,323.0L658.1,322.8L659.5,333.6L660.9,333.0L662.4,340.7L663.7,335.7L665.1,337.6L666.5,329.5L667.9,332.2L669.5,326.0L670.8,329.0L672.2,342.4L673.7,347.0L675.0,354.1L676.4,353.8L677.0,358.5L677.8,355.9L679.2,339.9L680.0,337.5L680.6,342.1L682.0,340.1L683.4,349.9L685.0,350.4L686.3,343.8L687.7,339.3L689.1,342.3L690.5,336.0L691.9,340.7L693.3,357.3L694.7,363.0L696.1,359.0L698.0,347.0L699.0,353.0L700.4,353.8L701.8,350.1L703.2,357.8L704.4,357.0L706.0,353.8L707.4,339.9L709.0,337.5L710.2,333.0L711.6,338.5L713.1,329.8L714.5,335.7L715.7,331.0L717.3,338.3L719.0,353.7L720.1,345.4L721.5,346.5L722.9,334.6L724.8,329.4L725.8,331.3L727.2,342.8L728.6,347.0L730.0,349.1L731.4,363.2L732.8,366.6L734.2,365.0L735.6,351.7L736.7,350.4L738.4,346.1L739.8,353.2L741.3,352.2L743.0,347.0L744.1,352.4L745.5,345.2L746.9,346.4L748.3,357.2L749.7,350.2L751.1,358.4L753.0,357.0L753.9,352.0L755.4,361.1L756.8,351.9L758.2,351.1L759.6,359.5L761.0,358.9L762.6,353.7L763.8,348.7L765.2,347.3L766.6,353.9L768.0,345.6L769.5,345.7L770.9,343.6L771.6,347.0L772.3,352.1L773.7,348.3L775.1,362.2L777.0,363.0L777.9,366.2L779.3,355.2L780.0,357.0L780.7,360.6L782.1,350.6L783.6,357.2L784.5,351.6L786.4,354.9L787.8,343.5L789.2,351.4L791.0,345.6L792.0,342.4L793.4,351.8L794.8,344.1L795.8,348.8L797.7,347.0L799.1,356.0L800.5,347.7L802.0,353.7L803.3,352.3L804.7,361.9L806.1,364.3L807.5,358.2L808.9,368.6L810.0,365.0L811.8,364.3L813.6,357.0L814.6,360.6L816.0,354.4L817.4,363.5L818.8,355.5L820.2,365.1L821.6,358.5L823.0,363.4L824.4,357.7L825.9,364.1L827.3,354.7L828.0,357.0L828.7,361.0L830.1,353.4L831.5,362.5L832.9,355.9L834.3,356.8L835.7,363.6L837.1,366.1L837.8,361.7L838.5,356.3L840.0,361.0L841.4,351.6L842.7,352.0L844.2,350.6L845.6,362.4L847.0,358.1L849.0,366.6L849.8,361.7L851.2,366.5L852.6,356.5L854.1,362.2L855.6,355.3L856.9,351.3L858.3,362.1L859.7,355.0L861.1,362.7L862.5,355.8L863.7,361.7L865.3,355.9L866.8,362.2L868.2,352.8L870.0,353.7L871.0,349.7L872.4,359.0L873.8,351.3L875.2,360.4L876.6,357.0L878.0,358.7L879.4,348.0L880.8,355.3L882.3,344.5L883.7,345.6L885.1,344.2L886.5,354.0L887.9,348.6L889.3,359.5L891.0,357.0L892.1,351.9L893.5,358.4L894.9,347.5L896.0,350.4L897.8,357.8L899.2,352.9L900.8,360.0L902.0,354.3L903.4,351.7L904.8,356.6L906.2,345.8L907.6,350.1L909.0,344.0L910.5,348.2L911.9,342.4L913.3,342.8L914.7,353.1L915.3,348.8L916.1,346.2L917.5,354.6L918.9,350.0L920.3,358.3L921.8,357.0L923.1,357.2L924.6,346.9L926.0,352.8L926.7,347.2L927.4,345.2L928.8,360.3L930.0,360.0L931.6,357.6L933.0,345.7L934.4,347.4L935.7,339.0L937.2,337.0L938.7,348.8L940.1,343.4L941.0,348.8L942.9,351.5L944.3,344.4L945.7,349.8L947.1,343.4L949.0,345.6L949.9,340.4L951.3,346.8L952.8,336.7L953.5,340.7L954.2,348.0L955.6,347.2L957.0,357.0L958.4,364.3L959.0,373.0L959.8,372.1L961.2,353.6L962.0,353.7L962.6,356.3L964.0,357.4L965.4,348.1L967.0,350.4L968.3,353.6L970.0,366.6L971.1,379.4L971.9,382.7L972.5,372.4L974.0,357.0L975.3,354.2L976.7,364.8L978.0,361.7L980.0,324.6L981.0,313.4L982.5,305.0L983.8,306.9L984.8,300.4L986.6,309.6L988.0,303.5L989.6,315.0L990.8,309.9L992.2,319.1L993.6,310.3L995.1,320.0L996.0,315.0L997.9,304.5L999.0,308.4L1000.7,306.8L1002.1,310.2L1003.5,323.4L1004.9,323.9L1005.8,321.0L1007.8,319.7L1009.2,324.3L1010.6,332.7L1012.0,324.3L1013.4,328.8L1014.8,313.8L1015.5,318.0L1016.2,322.7L1017.6,305.4L1019.0,307.0L1020.4,319.0L1021.8,323.9L1023.5,324.6L1024.7,317.9L1026.1,315.9L1028.0,320.0L1028.9,316.3L1030.3,325.2L1031.6,323.0" fill="none" stroke="#00ff00" stroke-width="2.3" stroke-linejoin="round"/>
<path d="M56.00,587V384.7H56.94V387.9H57.88V386.5H58.82V390.2H59.76V395.3H60.70V397.3H61.64V393.1H62.58V395.7H63.52V387.8H64.46V399.8H65.40V396.8H66.34V400.4H67.28V402.2H68.22V399.4H69.16V402.8H70.10V402.4H71.04V398.1H71.98V402.6H72.92V400.4H73.86V397.4H74.80V382.6H75.74V392.6H76.68V392.1H77.62V391.4H78.56V396.1H79.50V399.6H80.44V395.8H81.38V395.1H82.32V396.5H83.26V400.9H84.20V401.2H85.14V397.6H86.08V397.7H87.02V395.5H87.96V390.1H88.90V383.1H89.84V395.2H90.78V396.7H91.72V397.4H92.66V398.6H93.60V402.3H94.54V407.0H95.48V412.1H96.42V418.9H97.36V416.3H98.30V414.1H99.24V406.6H100.18V400.0H101.12V402.2H102.06V405.8H103.00V406.0H103.94V408.2H104.88V405.4H105.82V411.4H106.76V415.6H107.70V415.7H108.64V419.5H109.58V420.6H110.52V415.8H111.46V411.4H112.40V404.4H113.34V398.8H114.28V397.1H115.22V401.9H116.16V410.3H117.10V417.9H118.04V415.7H118.98V413.3H119.92V415.2H120.86V405.3H121.80V411.7H122.74V418.3H123.68V425.9H124.62V430.4H125.56V430.4H126.50V431.6H127.44V425.9H128.38V437.2H129.32V439.1H130.26V435.9H131.20V432.0H132.14V431.2H133.08V440.6H134.02V460.8H134.96V458.9H135.90V455.9H136.84V455.3H137.78V450.8H138.72V453.7H139.66V452.2H140.60V450.5H141.54V448.0H142.48V449.4H143.42V447.8H144.36V446.3H145.30V447.0H146.24V446.8H147.18V447.5H148.12V451.2H149.06V451.3H150.00V453.7H150.94V458.7H151.88V459.4H152.82V460.9H153.76V460.4H154.70V458.7H155.64V448.1H156.58V456.1H157.52V457.3H158.46V454.7H159.40V451.1H160.34V449.1H161.28V446.0H162.22V444.1H163.16V441.8H164.10V445.4H165.04V443.7H165.98V441.7H166.92V443.1H167.86V443.5H168.80V445.7H169.74V450.3H170.68V451.0H171.62V451.1H172.56V447.1H173.50V455.5H174.44V459.1H175.38V457.3H176.32V451.7H177.26V452.6H178.20V443.0H179.14V444.2H180.08V439.7H181.02V438.4H181.96V432.2H182.90V430.2H183.84V432.0H184.78V435.3H185.72V433.7H186.66V432.1H187.60V441.1H188.54V439.5H189.48V444.8H190.42V435.1H191.36V449.4H192.30V452.7H193.24V451.0H194.18V446.5H195.12V446.7H196.06V440.8H197.00V439.8H197.94V439.6H198.88V443.4H199.82V439.5H200.76V445.1H201.70V445.3H202.64V447.3H203.58V444.4H204.52V444.4H205.46V445.6H206.40V450.5H207.34V446.4H208.28V451.7H209.22V451.3H210.16V451.0H211.10V452.2H212.04V455.3H212.98V448.4H213.92V447.4H214.86V446.9H215.80V447.8H216.74V442.9H217.68V441.9H218.62V442.0H219.56V441.8H220.50V438.1H221.44V442.1H222.38V439.3H223.32V440.0H224.26V435.6H225.20V441.3H226.14V441.6H227.08V440.5H228.02V446.1H228.96V446.2H229.90V448.1H230.84V445.2H231.78V446.9H232.72V452.4H233.66V448.2H234.60V448.2H235.54V444.4H236.48V448.4H237.42V443.9H238.36V444.7H239.30V438.4H240.24V439.6H241.18V435.7H242.12V440.8H243.06V437.7H244.00V433.6H244.94V434.8H245.88V437.6H246.82V434.3H247.76V434.8H248.70V436.2H249.64V436.3H250.58V436.7H251.52V438.3H252.46V438.1H253.40V441.0H254.34V431.6H255.28V441.5H256.22V446.3H257.16V438.7H258.10V442.7H259.04V442.8H259.98V444.3H260.92V441.1H261.86V436.1H262.80V444.1H263.74V442.1H264.68V443.6H265.62V446.2H266.56V444.7H267.50V438.4H268.44V443.5H269.38V441.2H270.32V443.7H271.26V444.9H272.20V448.5H273.14V447.7H274.08V450.4H275.02V456.4H275.96V455.0H276.90V456.2H277.84V459.1H278.78V453.0H279.72V452.9H280.66V456.1H281.60V454.7H282.54V454.5H283.48V450.3H284.42V452.2H285.36V449.8H286.30V449.5H287.24V455.2H288.18V451.5H289.12V453.4H290.06V458.0H291.00V457.8H291.94V454.5H292.88V455.9H293.82V455.3H294.76V454.1H295.70V456.5H296.64V452.0H297.58V456.1H298.52V450.9H299.46V455.8H300.40V454.0H301.34V452.9H302.28V453.7H303.22V451.0H304.16V448.6H305.10V444.0H306.04V450.9H306.98V453.7H307.92V453.6H308.86V450.5H309.80V450.4H310.74V452.7H311.68V450.1H312.62V446.7H313.56V451.0H314.50V449.5H315.44V450.5H316.38V449.2H317.32V449.0H318.26V448.4H319.20V447.6H320.14V449.7H321.08V448.5H322.02V449.1H322.96V450.0H323.90V447.9H324.84V451.0H325.78V451.3H326.72V450.3H327.66V451.0H328.60V449.7H329.54V452.7H330.48V450.8H331.42V452.8H332.36V450.9H333.30V448.7H334.24V452.1H335.18V451.2H336.12V451.6H337.06V451.7H338.00V452.1H338.94V448.2H339.88V450.0H340.82V449.4H341.76V449.3H342.70V448.6H343.64V448.3H344.58V449.2H345.52V448.2H346.46V449.2H347.40V450.5H348.34V448.7H349.28V450.8H350.22V450.1H351.16V450.9H352.10V451.1H353.04V452.5H353.98V453.2H354.92V454.3H355.86V454.3H356.80V455.1H357.74V453.5H358.68V454.9H359.62V452.7H360.56V453.9H361.50V452.9H362.44V452.9H363.38V451.3H364.32V448.5H365.26V452.8H366.20V450.1H367.14V451.4H368.08V452.9H369.02V440.1H369.96V449.6H370.90V451.1H371.84V448.0H372.78V445.8H373.72V449.6H374.66V449.9H375.60V448.9H376.54V450.2H377.48V447.5H378.42V448.1H379.36V445.8H380.30V447.5H381.24V446.5H382.18V448.6H383.12V448.2H384.06V445.7H385.00V446.1H385.94V447.2H386.88V448.3H387.82V451.3H388.76V451.4H389.70V452.2H390.64V452.7H391.58V451.7H392.52V454.0H393.46V456.7H394.40V456.1H395.34V455.3H396.28V454.0H397.22V457.1H398.16V455.3H399.10V456.2H400.04V454.7H400.98V455.4H401.92V455.7H402.86V456.1H403.80V454.8H404.74V457.5H405.68V455.7H406.62V451.1H407.56V457.9H408.50V456.2H409.44V456.6H410.38V456.1H411.32V457.5H412.26V455.1H413.20V454.1H414.14V456.6H415.08V445.7H416.02V455.5H416.96V451.9H417.90V452.5H418.84V454.8H419.78V453.1H420.72V454.7H421.66V453.9H422.60V455.1H423.54V456.1H424.48V455.6H425.42V454.3H426.36V454.8H427.30V454.6H428.24V453.1H429.18V453.5H430.12V451.6H431.06V452.0H432.00V451.5H432.94V451.5H433.88V451.1H434.82V450.2H435.76V447.8H436.70V446.8H437.64V447.3H438.58V443.6H439.52V425.9H440.46V427.6H441.40V407.5H442.34V384.3H443.28V361.6H444.22V370.6H445.16V369.9H446.10V376.5H447.04V385.5H447.98V398.1H448.92V398.0H449.86V402.6H450.80V401.9H451.74V400.4H452.68V397.0H453.62V384.9H454.56V378.2H455.50V378.2H456.44V374.2H457.38V381.9H458.32V381.3H459.26V384.8H460.20V389.5H461.14V389.2H462.08V391.7H463.02V396.0H463.96V400.2H464.90V409.4H465.84V411.9H466.78V410.0H467.72V406.7H468.66V409.0H469.60V403.7H470.54V397.5H471.48V394.7H472.42V400.1H473.36V397.5H474.30V392.8H475.24V386.5H476.18V393.2H477.12V394.6H478.06V393.4H479.00V391.4H479.94V391.4H480.88V391.1H481.82V390.0H482.76V395.8H483.70V392.8H484.64V386.9H485.58V390.4H486.52V384.5H487.46V379.7H488.40V377.7H489.34V380.7H490.28V374.0H491.22V378.1H492.16V376.2H493.10V370.7H494.04V372.7H494.98V374.6H495.92V371.4H496.86V371.6H497.80V362.0H498.74V362.5H499.68V356.1H500.62V361.1H501.56V361.1H502.50V358.9H503.44V356.9H504.38V349.7H505.32V359.1H506.26V355.4H507.20V358.4H508.14V355.0H509.08V357.1H510.02V356.0H510.96V359.0H511.90V352.7H512.84V352.2H513.78V350.6H514.72V348.4H515.66V350.8H516.60V354.7H517.54V355.7H518.48V352.9H519.42V352.9H520.36V357.1H521.30V354.9H522.24V355.2H523.18V355.1H524.12V349.6H525.06V354.7H526.00V347.8H526.94V350.3H527.88V352.5H528.82V348.5H529.76V345.4H530.70V345.9H531.64V344.6H532.58V339.8H533.52V335.2H534.46V340.0H535.40V334.7H536.34V338.9H537.28V341.5H538.22V335.5H539.16V338.3H540.10V340.8H541.04V334.8H541.98V329.0H542.92V326.0H543.86V334.3H544.80V328.8H545.74V335.3H546.68V339.3H547.62V337.6H548.56V337.3H549.50V334.1H550.44V333.3H551.38V327.3H552.32V330.7H553.26V323.8H554.20V327.9H555.14V330.7H556.08V327.2H557.02V327.1H557.96V328.6H558.90V331.7H559.84V339.2H560.78V341.7H561.72V339.8H562.66V338.5H563.60V332.1H564.54V322.9H565.48V320.9H566.42V320.7H567.36V317.1H568.30V313.4H569.24V305.2H570.18V300.5H571.12V315.9H572.06V312.0H573.00V324.6H573.94V311.2H574.88V315.3H575.82V303.3H576.76V302.8H577.70V288.6H578.64V289.3H579.58V291.7H580.52V298.1H581.46V302.5H582.40V307.8H583.34V312.0H584.28V308.1H585.22V303.4H586.16V307.7H587.10V308.0H588.04V306.6H588.98V301.6H589.92V309.2H590.86V304.2H591.80V312.7H592.74V310.4H593.68V308.7H594.62V323.1H595.56V326.2H596.50V345.5H597.44V355.4H598.38V357.7H599.32V334.7H600.26V316.2H601.20V314.3H602.14V316.0H603.08V315.0H604.02V321.8H604.96V318.1H605.90V319.1H606.84V318.3H607.78V311.5H608.72V320.0H609.66V325.8H610.60V333.1H611.54V335.3H612.48V331.6H613.42V314.6H614.36V304.8H615.30V285.2H616.24V292.9H617.18V304.9H618.12V308.9H619.06V300.4H620.00V296.5H620.94V290.1H621.88V284.2H622.82V278.0H623.76V288.3H624.70V295.5H625.64V305.8H626.58V312.9H627.52V309.1H628.46V325.6H629.40V325.6H630.34V337.9H631.28V371.3H632.22V362.2H633.16V354.8H634.10V348.8H635.04V344.4H635.98V346.8H636.92V350.1H637.86V350.1H638.80V349.1H639.74V345.3H640.68V345.0H641.62V339.2H642.56V343.5H643.50V344.9H644.44V343.1H645.38V338.0H646.32V333.7H647.26V335.8H648.20V334.8H649.14V337.5H650.08V333.1H651.02V333.7H651.96V337.1H652.90V340.2H653.84V334.5H654.78V342.1H655.72V343.3H656.66V341.4H657.60V343.2H658.54V338.0H659.48V336.9H660.42V339.9H661.36V338.2H662.30V341.3H663.24V344.2H664.18V338.0H665.12V343.4H666.06V338.0H667.00V333.9H667.94V338.3H668.88V337.0H669.82V339.8H670.76V344.9H671.70V355.0H672.64V364.2H673.58V385.9H674.52V397.9H675.46V394.7H676.40V402.2H677.34V400.8H678.28V405.5H679.22V392.8H680.16V399.7H681.10V401.1H682.04V400.9H682.98V406.9H683.92V410.6H684.86V402.6H685.80V403.5H686.74V406.5H687.68V400.8H688.62V402.2H689.56V397.7H690.50V393.0H691.44V403.1H692.38V406.8H693.32V411.0H694.26V417.3H695.20V412.2H696.14V414.8H697.08V419.7H698.02V418.6H698.96V419.5H699.90V418.7H700.84V424.0H701.78V420.7H702.72V419.8H703.66V421.3H704.60V414.4H705.54V415.8H706.48V414.0H707.42V406.9H708.36V412.6H709.30V411.0H710.24V408.2H711.18V411.9H712.12V402.7H713.06V407.9H714.00V405.4H714.94V403.5H715.88V409.9H716.82V411.3H717.76V418.2H718.70V407.7H719.64V423.6H720.58V417.8H721.52V416.1H722.46V412.1H723.40V413.0H724.34V409.0H725.28V408.3H726.22V414.4H727.16V417.4H728.10V423.7H729.04V427.0H729.98V426.2H730.92V431.6H731.86V431.2H732.80V435.5H733.74V437.8H734.68V435.8H735.62V431.0H736.56V429.8H737.50V433.8H738.44V432.1H739.38V430.6H740.32V428.4H741.26V434.0H742.20V425.1H743.14V432.0H744.08V433.6H745.02V438.4H745.96V442.5H746.90V440.0H747.84V435.3H748.78V442.0H749.72V438.6H750.66V433.5H751.60V441.1H752.54V438.7H753.48V442.9H754.42V440.1H755.36V446.8H756.30V441.0H757.24V441.7H758.18V444.0H759.12V440.7H760.06V436.5H761.00V442.7H761.94V436.3H762.88V438.8H763.82V442.6H764.76V441.0H765.70V441.4H766.64V436.1H767.58V437.6H768.52V441.3H769.46V437.7H770.40V433.6H771.34V439.4H772.28V438.9H773.22V439.2H774.16V444.0H775.10V448.0H776.04V443.5H776.98V447.9H777.92V449.5H778.86V452.7H779.80V446.5H780.74V448.5H781.68V448.8H782.62V447.0H783.56V443.2H784.50V444.5H785.44V443.1H786.38V442.8H787.32V439.9H788.26V444.4H789.20V438.9H790.14V434.5H791.08V444.2H792.02V443.3H792.96V443.1H793.90V439.2H794.84V443.4H795.78V441.7H796.72V446.3H797.66V443.5H798.60V446.1H799.54V446.0H800.48V446.9H801.42V449.3H802.36V454.0H803.30V453.3H804.24V453.6H805.18V458.8H806.12V458.6H807.06V461.3H808.00V458.0H808.94V457.4H809.88V462.0H810.82V455.7H811.76V459.8H812.70V460.4H813.64V458.5H814.58V457.1H815.52V455.3H816.46V454.3H817.40V452.4H818.34V453.8H819.28V454.0H820.22V451.7H821.16V455.7H822.10V455.2H823.04V449.9H823.98V451.3H824.92V452.4H825.86V449.8H826.80V447.7H827.74V450.5H828.68V448.9H829.62V449.9H830.56V451.3H831.50V448.7H832.44V451.8H833.38V449.5H834.32V451.6H835.26V448.5H836.20V451.4H837.14V447.9H838.08V451.3H839.02V439.0H839.96V448.5H840.90V449.5H841.84V450.7H842.78V449.6H843.72V450.8H844.66V450.3H845.60V455.0H846.54V453.5H847.48V455.0H848.42V456.0H849.36V459.8H850.30V458.4H851.24V454.7H852.18V454.0H853.12V457.5H854.06V455.2H855.00V454.7H855.94V453.1H856.88V450.2H857.82V451.2H858.76V453.8H859.70V455.0H860.64V455.4H861.58V454.1H862.52V460.1H863.46V460.7H864.40V455.1H865.34V456.0H866.28V458.8H867.22V462.5H868.16V458.8H869.10V461.2H870.04V456.9H870.98V457.4H871.92V459.1H872.86V457.6H873.80V448.5H874.74V455.3H875.68V455.9H876.62V453.6H877.56V451.1H878.50V450.1H879.44V452.3H880.38V447.6H881.32V446.3H882.26V445.8H883.20V450.8H884.14V451.9H885.08V449.6H886.02V449.0H886.96V451.6H887.90V455.5H888.84V454.7H889.78V457.9H890.72V458.8H891.66V459.5H892.60V460.4H893.54V455.9H894.48V454.5H895.42V457.8H896.36V458.6H897.30V450.0H898.24V445.8H899.18V456.3H900.12V455.7H901.06V455.0H902.00V452.6H902.94V452.8H903.88V446.5H904.82V447.1H905.76V448.2H906.70V446.5H907.64V443.6H908.58V440.8H909.52V442.8H910.46V443.1H911.40V443.9H912.34V450.0H913.28V449.8H914.22V450.2H915.16V450.8H916.10V450.2H917.04V450.6H917.98V454.1H918.92V450.4H919.86V452.5H920.80V456.3H921.74V451.7H922.68V457.6H923.62V454.5H924.56V457.5H925.50V457.9H926.44V452.0H927.38V453.5H928.32V450.6H929.26V451.9H930.20V448.7H931.14V447.8H932.08V446.4H933.02V442.4H933.96V440.2H934.90V438.8H935.84V439.2H936.78V442.9H937.72V446.0H938.66V441.0H939.60V445.4H940.54V445.7H941.48V446.2H942.42V442.9H943.36V433.3H944.30V434.3H945.24V444.7H946.18V444.2H947.12V443.5H948.06V439.5H949.00V439.6H949.94V438.5H950.88V440.6H951.82V437.1H952.76V442.4H953.70V445.4H954.64V446.5H955.58V446.8H956.52V446.5H957.46V451.5H958.40V452.0H959.34V447.9H960.28V450.1H961.22V451.2H962.16V449.4H963.10V449.8H964.04V451.0H964.98V447.8H965.92V448.5H966.86V454.3H967.80V452.2H968.74V451.5H969.68V456.9H970.62V461.9H971.56V465.7H972.50V459.6H973.44V458.3H974.38V457.0H975.32V450.4H976.26V447.4H977.20V451.3H978.14V439.0H979.08V431.1H980.02V410.9H980.96V400.7H981.90V381.8H982.84V371.9H983.78V374.7H984.72V376.1H985.66V373.4H986.60V375.7H987.54V373.2H988.48V379.1H989.42V370.7H990.36V370.5H991.30V373.2H992.24V378.9H993.18V375.9H994.12V375.7H995.06V379.0H996.00V378.5H996.94V372.1H997.88V364.8H998.82V363.5H999.76V366.0H1000.70V369.9H1001.64V365.2H1002.58V372.1H1003.52V368.0H1004.46V365.8H1005.40V371.4H1006.34V379.6H1007.28V383.0H1008.22V382.6H1009.16V385.3H1010.10V385.7H1011.04V382.3H1011.98V383.3H1012.92V385.4H1013.86V382.4H1014.80V387.1H1015.74V387.1H1016.68V382.3H1017.62V380.8H1018.56V377.6H1019.50V384.2H1020.44V383.3H1021.38V377.0H1022.32V378.0H1023.26V369.8H1024.20V370.6H1025.14V365.7H1026.08V371.2H1027.02V364.7H1027.96V366.2H1028.90V360.1H1029.84V350.7H1030.78V351.7H1031.72V587Z" fill="#0082ff" fill-opacity=".82"/>
<rect x="56" y="75" width="1084" height="511" fill="url(#st)" clip-path="url(#cb)"/>
<path d="M56.0,177.5L57.4,180.5L58.8,192.5L59.7,192.0L61.6,190.9L63.0,196.8L64.5,189.7L66.0,188.8L67.3,194.7L68.7,196.7L69.4,195.2L70.1,190.5L71.5,195.9L72.9,185.5L74.2,187.0L75.7,194.0L77.2,189.6L79.0,195.2L80.0,192.9L81.4,201.8L82.3,198.4L84.2,196.9L85.5,190.4L87.0,200.8L88.0,203.3L90.4,192.0L91.2,197.0L92.7,193.5L93.6,198.4L95.5,206.4L96.8,218.8L98.3,198.1L100.0,182.3L101.1,182.6L102.5,194.0L103.3,192.0L103.9,185.0L105.0,182.3L106.8,186.0L108.2,200.4L109.0,200.0L111.0,193.4L112.0,185.5L113.8,179.6L114.6,172.0L115.2,173.9L116.6,195.3L117.8,201.7L119.4,193.6L120.9,178.0L121.7,175.8L123.7,192.1L125.0,208.0L126.5,208.3L127.5,214.6L129.3,201.5L130.7,198.4L132.7,197.8L133.6,216.9L134.6,247.0L136.4,239.6L137.9,227.5L139.2,228.1L140.4,237.2L142.0,225.4L143.7,219.4L144.8,222.3L146.2,214.7L147.0,217.8L147.6,226.5L149.1,229.5L150.0,238.8L151.9,229.4L152.7,229.0L155.0,258.2L156.1,255.2L157.5,241.0L158.2,240.4L158.9,239.4L160.5,227.5L161.8,236.0L163.0,237.2L164.6,222.9L165.6,219.4L167.4,235.5L168.0,235.6L168.8,229.6L170.2,231.3L171.0,226.0L171.6,227.2L173.0,241.0L174.4,247.0L175.8,242.3L176.6,235.6L177.3,229.6L179.2,227.5L180.1,215.0L180.8,211.4L181.5,212.8L182.9,198.7L184.0,198.4L185.7,211.4L187.1,216.5L188.2,214.6L189.9,226.5L191.5,243.7L192.8,235.0L194.2,231.9L195.3,230.7L197.0,218.3L198.0,216.2L199.8,220.8L201.2,230.7L202.6,221.5L204.4,217.2L205.5,228.0L206.7,234.0L208.3,233.7L209.0,227.5L209.7,231.4L211.5,251.7L212.5,243.7L213.9,245.3L215.4,235.6L216.7,239.0L218.1,230.4L219.6,234.0L221.0,232.6L222.8,240.4L223.8,240.1L225.2,228.4L226.0,229.0L226.6,233.8L228.0,230.2L229.3,237.2L230.8,236.7L232.5,227.5L233.7,223.7L235.1,231.0L236.5,221.8L237.3,226.0L239.3,216.9L241.0,214.0L242.1,221.8L243.5,220.1L245.4,229.0L246.3,229.8L247.8,227.4L249.2,218.0L251.0,218.5L252.0,224.9L253.4,225.2L254.8,236.8L255.7,236.6L257.6,235.4L259.0,222.8L260.0,224.3L261.9,213.0L263.0,212.3L264.7,213.2L266.4,222.7L267.5,217.8L268.9,221.8L270.0,216.2L271.7,216.8L273.1,228.5L274.5,227.5L276.0,238.5L277.7,242.0L278.8,242.0L280.2,230.7L281.0,230.7L281.6,233.4L283.0,227.5L284.4,229.0L285.8,232.4L287.2,233.5L288.6,243.4L289.7,243.7L291.5,236.7L293.2,235.6L294.3,235.5L295.7,245.1L296.5,243.7L297.1,248.1L298.5,240.5L299.9,248.3L301.0,245.3L302.8,242.6L304.5,234.0L305.6,238.8L307.0,237.5L307.8,242.0L309.8,235.5L311.0,234.6L312.6,237.1L314.0,232.8L315.8,235.6L316.8,236.1L318.3,228.1L319.7,230.4L321.1,222.4L322.0,223.6L323.9,222.4L325.3,227.8L327.0,226.0L328.1,231.1L330.0,232.4L330.9,235.1L332.4,231.0L333.8,237.6L335.2,235.6L336.6,238.9L338.0,236.3L340.0,240.4L340.8,241.3L342.2,238.9L343.6,231.6L345.0,230.7L346.5,239.5L348.0,245.3L349.3,247.5L350.7,243.0L352.0,245.3L353.5,238.4L354.6,237.2L356.3,234.1L357.7,237.8L359.1,231.8L361.0,233.3L362.0,230.8L363.4,234.8L364.8,230.1L366.2,235.0L367.6,230.2L369.0,232.4L370.4,234.2L371.4,239.8L373.2,231.7L374.6,230.7L376.1,232.0L377.5,224.5L378.8,226.0L380.3,225.3L381.7,217.4L383.7,216.2L384.5,221.0L385.9,220.3L387.0,226.0L388.8,228.4L390.2,223.8L390.8,226.0L391.6,227.3L393.4,238.8L394.4,234.8L395.8,236.8L396.6,232.4L397.2,234.3L398.6,230.1L400.0,234.9L401.4,232.4L402.9,235.2L403.7,240.4L405.7,239.2L407.1,243.0L408.5,239.8L409.5,242.0L411.3,235.3L412.0,235.6L412.7,234.2L414.4,237.2L415.5,252.2L416.6,269.5L418.5,296.0L419.8,277.5L420.8,259.8L422.6,254.3L424.0,253.4L425.4,256.2L427.3,255.0L428.2,249.2L429.6,250.1L430.5,245.3L432.5,248.7L433.7,246.9L435.3,246.6L436.7,239.6L438.0,240.4L440.0,224.3L440.9,213.2L442.5,188.8L443.8,178.2L444.4,169.4L445.2,168.4L446.7,175.8L448.0,192.6L449.4,203.5L450.5,217.8L452.2,204.3L453.0,201.7L453.6,202.9L455.0,191.4L456.3,190.4L457.8,192.4L459.6,201.7L460.7,200.7L462.1,208.5L462.8,206.5L463.5,214.8L464.9,228.2L466.0,234.6L467.7,224.6L469.0,211.4L470.5,211.6L472.5,219.4L473.4,215.2L474.8,216.4L476.7,209.8L477.6,214.3L479.0,211.8L480.6,217.8L481.8,215.5L483.2,217.3L484.6,223.3L485.4,220.4L486.0,215.8L487.5,218.1L488.9,209.7L490.3,212.5L491.0,208.0L491.7,207.8L493.1,218.6L494.0,219.4L495.9,213.7L497.7,204.3L498.7,208.9L500.1,204.2L501.6,212.2L503.0,211.4L504.4,219.8L505.8,222.7L507.2,223.6L508.0,219.4L508.6,222.2L510.0,238.8L511.4,224.2L512.9,216.2L514.2,218.4L516.0,226.0L517.1,227.0L519.0,219.4L519.9,224.9L521.3,222.9L523.0,230.7L524.1,226.4L525.5,230.8L527.4,226.0L528.3,224.7L530.0,229.6L531.2,227.4L532.7,227.1L534.0,228.2L534.9,230.0L537.1,231.8L538.2,230.3L540.0,230.0L541.0,229.6L542.9,231.1L543.9,230.5L545.6,227.8L546.7,231.3L547.8,232.9L549.5,231.8L551.1,232.3L552.3,230.3L553.4,230.0L555.6,224.0L556.5,227.0L557.8,228.9L559.4,228.9L560.0,227.8L560.8,227.6L562.2,229.8L563.4,230.0L565.6,224.0L566.4,223.0L568.3,222.9L569.2,222.6L570.5,224.0L572.3,231.1L573.5,232.6L574.9,232.0L575.6,233.4L576.3,231.9L577.2,227.8L579.4,227.1L580.5,229.5L582.3,235.6L583.3,235.5L584.8,233.2L585.6,233.4L587.6,232.3L588.3,232.9L589.0,233.0L590.5,231.1L591.8,233.2L593.4,234.5L594.6,235.3L596.3,235.1L597.4,244.1L598.3,252.3L600.7,231.1L601.7,232.6L603.4,233.4L604.5,231.7L605.9,232.3L606.7,231.1L607.3,231.2L608.7,234.8L609.6,235.1L611.9,235.6L612.9,231.8L614.1,226.2L616.3,224.0L617.2,226.2L618.5,231.1L620.0,233.4L620.7,235.6L621.4,234.3L623.0,228.5L624.2,233.3L625.2,235.6L627.4,241.1L628.5,237.5L629.6,235.6L631.3,253.5L631.9,261.2L632.7,251.3L634.1,235.6L635.5,239.4L636.3,240.0L636.9,239.6L638.5,235.6L639.7,238.4L641.2,239.6L642.6,239.8L643.4,238.9L645.4,238.9L646.1,237.8L646.8,235.6L648.3,232.9L650.1,238.3L651.0,238.2L652.4,235.7L653.4,235.6L655.2,231.6L656.8,229.6L658.1,231.6L659.0,234.5L660.9,234.2L662.3,235.6L663.7,236.9L665.7,236.7L666.5,236.4L667.9,233.4L669.7,230.7L670.8,231.6L671.9,234.5L673.5,240.0L674.6,255.6L676.8,262.3L677.8,257.0L678.6,251.2L679.2,250.2L680.8,250.0L682.0,256.5L683.5,265.6L684.9,258.2L685.7,254.5L687.7,250.3L688.4,250.0L689.1,249.4L690.5,244.5L691.3,243.4L691.9,244.5L692.8,244.5L694.6,273.0L696.1,259.1L696.8,254.5L697.5,259.4L698.6,264.5L700.2,268.5L701.8,265.6L702.4,265.6L703.2,266.8L704.6,266.7L706.2,269.0L707.9,247.8L708.8,249.2L710.6,248.9L711.6,245.6L712.4,244.5L713.1,244.8L714.5,242.7L715.7,242.7L717.3,251.2L719.1,269.0L720.1,260.9L721.3,253.4L723.5,242.3L724.3,240.8L726.2,240.7L727.2,242.0L728.0,244.5L729.5,264.5L731.3,266.7L732.8,280.1L734.2,272.5L735.1,269.0L737.3,260.1L738.4,258.7L740.2,258.9L741.3,263.6L742.4,266.7L744.0,262.3L745.5,270.8L746.2,273.4L746.9,269.8L748.0,266.7L750.2,271.2L751.1,271.9L752.4,274.5L753.9,275.0L755.1,276.7L757.3,272.3L758.2,272.7L759.6,270.6L760.2,271.2L761.0,270.5L761.8,267.8L762.4,268.3L764.0,272.3L765.2,272.6L766.9,274.5L768.0,272.9L769.8,272.3L771.3,261.8L772.3,263.3L773.5,266.7L775.1,278.9L775.8,285.6L776.5,282.2L778.0,273.4L779.3,279.6L780.2,282.3L782.4,266.7L783.6,266.2L784.7,264.5L786.4,266.6L788.0,266.7L789.2,268.1L790.0,265.6L791.0,263.0L792.0,258.1L793.4,269.2L794.8,258.0L795.8,263.0L797.7,261.7L799.1,275.5L800.5,269.5L802.0,277.6L803.3,275.3L804.7,288.4L806.0,285.0L807.5,297.1L808.9,302.7L810.0,301.8L811.8,287.2L813.6,284.0L814.6,290.9L815.2,301.8L816.0,302.9L817.4,289.2L819.0,288.0L820.2,284.7L821.6,293.4L823.0,290.5L824.4,290.4L825.9,275.7L827.3,282.3L828.0,274.4L828.7,270.8L830.1,281.5L831.5,274.0L833.0,281.0L834.3,285.9L835.7,277.1L837.1,287.2L837.8,282.4L838.5,283.8L840.0,269.5L841.7,269.5L842.8,279.1L844.2,271.6L846.0,282.0L847.0,280.6L849.0,295.0L849.8,286.9L851.2,292.6L852.6,279.0L854.1,284.4L855.6,276.0L856.9,272.9L858.3,285.9L859.5,284.0L861.1,293.1L862.5,286.0L863.7,292.0L865.3,290.8L867.0,279.0L868.2,283.3L870.0,277.6L871.0,289.4L872.4,286.7L873.4,297.0L875.2,282.6L877.0,281.0L878.0,272.0L879.8,272.7L880.8,264.3L882.3,271.7L883.7,264.7L885.1,264.9L886.5,279.5L888.0,279.0L889.3,286.8L890.7,282.1L892.7,290.5L893.5,283.5L894.9,290.2L896.4,275.2L897.6,276.0L899.2,270.7L900.6,279.6L902.0,272.7L903.4,264.7L904.8,261.2L905.7,264.0L907.6,255.7L909.0,258.2L910.5,255.5L911.9,254.9L913.7,261.4L914.7,262.7L916.1,279.6L917.0,279.2L918.9,284.8L920.3,276.5L921.8,284.0L923.1,282.6L925.0,269.5L926.0,280.2L927.4,280.3L928.0,290.5L928.8,292.3L930.2,279.6L931.5,279.2L933.0,265.7L934.4,265.2L935.7,254.0L937.2,262.1L938.7,258.1L939.6,264.7L941.5,269.8L942.9,258.4L944.3,269.1L946.0,263.0L947.1,269.5L948.5,258.3L949.9,268.8L951.0,264.7L952.8,256.4L953.5,258.2L954.2,267.4L955.7,272.7L957.0,293.0L958.3,303.4L959.8,289.1L960.6,276.0L961.2,269.6L962.6,275.6L963.8,266.3L965.4,275.9L966.9,270.5L967.7,279.2L969.6,274.4L971.1,302.6L971.9,311.5L972.5,299.2L973.9,290.2L975.0,272.7L976.7,277.5L977.7,288.9L980.0,246.9L981.0,233.4L981.6,214.6L982.4,204.5L983.8,204.9L984.8,193.0L987.0,209.8L988.0,213.1L989.6,209.8L990.8,216.6L992.2,214.8L993.6,225.0L994.5,224.3L996.5,214.8L997.9,214.4L999.3,206.5L1000.7,212.7L1002.1,211.2L1004.0,219.4L1004.9,216.1L1006.3,218.6L1007.4,214.6L1009.2,225.4L1010.6,225.8L1011.6,232.4L1013.4,224.8L1014.8,227.5L1016.2,218.3L1017.0,219.4L1017.6,221.9L1019.0,214.3L1020.3,216.2L1021.8,224.4L1023.5,227.5L1024.7,225.5L1026.1,215.7L1026.8,216.2L1027.5,217.8L1028.9,211.0L1030.0,213.0L1032.0,219.4" fill="none" stroke="#000" stroke-width="1.2" stroke-linejoin="round"/>
<line x1="1032.5" y1="75" x2="1032.5" y2="586" stroke="#7f8796" stroke-width="1" stroke-dasharray="2,2"/>
<text x="1134.5" y="91.6" text-anchor="end" class="wm">Chiller kWr - COP</text>
</g>
<g class="al" clip-path="url(#cl)"><text x="50.3" y="593.3" text-anchor="end">0</text><text x="50.3" y="542.2" text-anchor="end">200</text><text x="50.3" y="491.1" text-anchor="end">400</text><text x="50.3" y="440.0" text-anchor="end">600</text><text x="50.3" y="388.9" text-anchor="end">800</text><text x="50.3" y="337.8" text-anchor="end">1,000</text><text x="50.3" y="286.7" text-anchor="end">1,200</text><text x="50.3" y="235.6" text-anchor="end">1,400</text><text x="50.3" y="184.5" text-anchor="end">1,600</text><text x="50.3" y="133.4" text-anchor="end">1,800</text><text x="50.3" y="82.3" text-anchor="end">2,000</text><text x="1145.3" y="593.3">0</text><text x="1145.3" y="550.7">1</text><text x="1145.3" y="508.1">2</text><text x="1145.3" y="465.6">3</text><text x="1145.3" y="423.0">4</text><text x="1145.3" y="380.4">5</text><text x="1145.3" y="337.8">6</text><text x="1145.3" y="295.2">7</text><text x="1145.3" y="252.6">8</text><text x="1145.3" y="210.1">9</text><text x="1145.3" y="167.5">10</text><text x="1145.3" y="124.9">11</text><text x="1145.3" y="82.3">12</text></g>
<g clip-path="url(#cx)"><g class="al xl"><text x="9.4" y="606.3">12:00 pm</text><text x="99.7" y="606.3">04:00 pm</text><text x="190.0" y="606.3">08:00 pm</text><text x="280.3" y="606.3">12:00 am</text><text x="370.5" y="606.3">04:00 am</text><text x="460.8" y="606.3">08:00 am</text><text x="551.1" y="606.3">12:00 pm</text><text x="641.4" y="606.3">04:00 pm</text><text x="731.7" y="606.3">08:00 pm</text><text x="821.9" y="606.3">12:00 am</text><text x="912.2" y="606.3">04:00 am</text><text x="1002.5" y="606.3">08:00 am</text><text x="1092.8" y="606.3">12:00 pm</text></g><g class="dl"><text x="58.5" y="627.3">14/08/2024</text><text x="280.3" y="627.3">15/08/2024</text><text x="821.9" y="627.3">16/08/2024</text></g></g>
<g stroke="#b9bfca" stroke-width="1.25"><line x1="97.5" y1="586" x2="97.5" y2="612"/><line x1="187.8" y1="586" x2="187.8" y2="612"/><line x1="278.1" y1="586" x2="278.1" y2="612"/><line x1="368.3" y1="586" x2="368.3" y2="612"/><line x1="458.6" y1="586" x2="458.6" y2="612"/><line x1="548.9" y1="586" x2="548.9" y2="612"/><line x1="639.2" y1="586" x2="639.2" y2="612"/><line x1="729.5" y1="586" x2="729.5" y2="612"/><line x1="819.7" y1="586" x2="819.7" y2="612"/><line x1="910.0" y1="586" x2="910.0" y2="612"/><line x1="1000.3" y1="586" x2="1000.3" y2="612"/><line x1="1090.6" y1="586" x2="1090.6" y2="612"/><line x1="56.3" y1="612" x2="56.3" y2="632.5"/><line x1="278.1" y1="586" x2="278.1" y2="632.5"/><line x1="819.7" y1="586" x2="819.7" y2="632.5"/></g>
</svg>
<div class="sq" style="left:11px;background:#007fff"></div><div class="lg" style="left:33px">Chiller kWr</div>
<div class="lg" style="left:836px">Chiller Running COP</div><div class="sq" style="left:981px;background:#00ff00"></div>
<div class="lg" style="left:1009px">Chiller Design COP</div><div class="sq" style="left:1145px;background:#000"></div>
<div class="bot"></div>
<div class="edge"></div>
</body></html>
